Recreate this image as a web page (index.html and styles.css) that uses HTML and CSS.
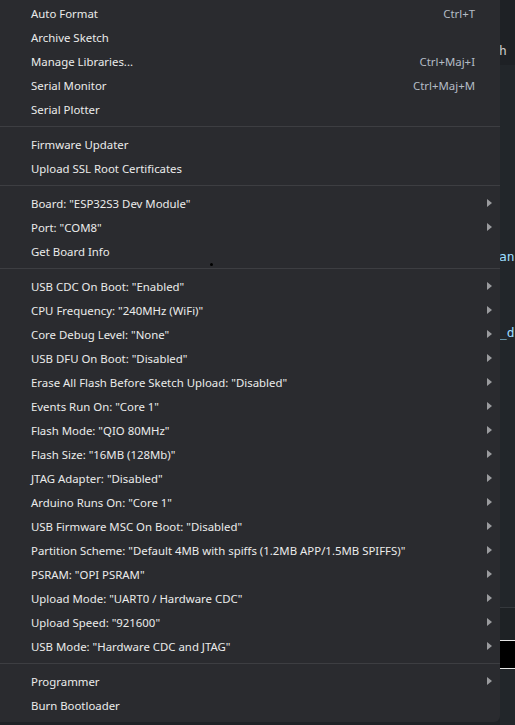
FILE: index.html
```html
<!DOCTYPE html>
<html>
<head>
<meta charset="utf-8">
<link rel="stylesheet" href="styles.css">
</head>
<body>
<div class="screen">
  <div class="menu">
    <div class="row"><span class="label">Auto Format</span><span class="key">Ctrl+T</span><span class="sub"></span></div>
    <div class="row"><span class="label">Archive Sketch</span><span class="sub"></span></div>
    <div class="row"><span class="label">Manage Libraries...</span><span class="key">Ctrl+Maj+I</span><span class="sub"></span></div>
    <div class="row"><span class="label">Serial Monitor</span><span class="key">Ctrl+Maj+M</span><span class="sub"></span></div>
    <div class="row"><span class="label">Serial Plotter</span><span class="sub"></span></div>
    <div class="sep"></div>
    <div class="row"><span class="label">Firmware Updater</span><span class="sub"></span></div>
    <div class="row"><span class="label">Upload SSL Root Certificates</span><span class="sub"></span></div>
    <div class="sep"></div>
    <div class="row"><span class="label">Board: "ESP32S3 Dev Module"</span><span class="sub"><i class="tri"></i></span></div>
    <div class="row"><span class="label">Port: "COM8"</span><span class="sub"><i class="tri"></i></span></div>
    <div class="row"><span class="label">Get Board Info</span><span class="sub"></span></div>
    <div class="sep"></div>
    <div class="row"><span class="label">USB CDC On Boot: "Enabled"</span><span class="sub"><i class="tri"></i></span></div>
    <div class="row"><span class="label">CPU Frequency: "240MHz (WiFi)"</span><span class="sub"><i class="tri"></i></span></div>
    <div class="row"><span class="label">Core Debug Level: "None"</span><span class="sub"><i class="tri"></i></span></div>
    <div class="row"><span class="label">USB DFU On Boot: "Disabled"</span><span class="sub"><i class="tri"></i></span></div>
    <div class="row"><span class="label">Erase All Flash Before Sketch Upload: "Disabled"</span><span class="sub"><i class="tri"></i></span></div>
    <div class="row"><span class="label">Events Run On: "Core 1"</span><span class="sub"><i class="tri"></i></span></div>
    <div class="row"><span class="label">Flash Mode: "QIO 80MHz"</span><span class="sub"><i class="tri"></i></span></div>
    <div class="row"><span class="label">Flash Size: "16MB (128Mb)"</span><span class="sub"><i class="tri"></i></span></div>
    <div class="row"><span class="label">JTAG Adapter: "Disabled"</span><span class="sub"><i class="tri"></i></span></div>
    <div class="row"><span class="label">Arduino Runs On: "Core 1"</span><span class="sub"><i class="tri"></i></span></div>
    <div class="row"><span class="label">USB Firmware MSC On Boot: "Disabled"</span><span class="sub"><i class="tri"></i></span></div>
    <div class="row"><span class="label">Partition Scheme: "Default 4MB with spiffs (1.2MB APP/1.5MB SPIFFS)"</span><span class="sub"><i class="tri"></i></span></div>
    <div class="row"><span class="label">PSRAM: "OPI PSRAM"</span><span class="sub"><i class="tri"></i></span></div>
    <div class="row"><span class="label">Upload Mode: "UART0 / Hardware CDC"</span><span class="sub"><i class="tri"></i></span></div>
    <div class="row"><span class="label">Upload Speed: "921600"</span><span class="sub"><i class="tri"></i></span></div>
    <div class="row"><span class="label">USB Mode: "Hardware CDC and JTAG"</span><span class="sub"><i class="tri"></i></span></div>
    <div class="sep"></div>
    <div class="row"><span class="label">Programmer</span><span class="sub"><i class="tri"></i></span></div>
    <div class="row"><span class="label">Burn Bootloader</span><span class="sub"></span></div>
    <i class="dot"></i>
  </div>
  <div class="editor">
    <div class="ed-top"><span class="frag grey">h</span></div>
    <div class="ed-main">
      <div class="gap g1"></div>
      <div class="frag blue">an</div>
      <div class="gap g2"></div>
      <div class="frag blue">_d</div>
    </div>
    <div class="ed-panel"></div>
    <div class="ed-black"></div>
    <div class="ed-bottom"></div>
  </div>
</div>
</body>
</html>
```
FILE: styles.css
```css
html, body {
  margin: 0;
  padding: 0;
  background: #1f2226;
}
.screen {
  display: flex;
  width: 515px;
  height: 725px;
  overflow: hidden;
  font-family: "Noto Sans", "Open Sans", sans-serif;
  font-size: 11.4px;
}
.menu {
  position: relative;
  width: 500px;
  flex: none;
  align-self: flex-start;
  background: #2a2b2f;
  padding: 1px 0 5px 0;
  border-bottom-right-radius: 6px;
}
.row {
  display: flex;
  align-items: center;
  height: 24px;
  padding: 0 8px 0 31px;
  color: #ebebeb;
  white-space: nowrap;
}
.label {
  flex: 1;
}
.key {
  color: #b4bcc6;
}
.sub {
  width: 17px;
  flex: none;
  display: flex;
  align-items: center;
}
.tri {
  display: block;
  margin-left: 12px;
  width: 0;
  height: 0;
  border-left: 5px solid #9a9b9e;
  border-top: 4px solid transparent;
  border-bottom: 4px solid transparent;
}
.sep {
  height: 1px;
  background: #3d3e42;
  margin: 5px 0 5px 0;
}
.dot {
  position: absolute;
  left: 210px;
  top: 263px;
  width: 3px;
  height: 3px;
  border-radius: 50%;
  background: #000;
}
.editor {
  flex: 1;
  display: flex;
  flex-direction: column;
  font-family: "DejaVu Sans Mono", monospace;
  font-size: 13px;
  line-height: 16px;
}
.ed-top {
  height: 65px;
  background: #1e2125;
  display: flex;
  align-items: flex-end;
  padding-bottom: 6px;
  box-sizing: border-box;
}
.ed-main {
  height: 542px;
  background: #22262a;
  border-bottom: 1px solid #34383c;
}
.g1 { height: 184px; }
.g2 { height: 60px; }
.frag {
  white-space: nowrap;
  margin-left: -1px;
}
.grey { color: #c9c9c9; }
.blue { color: #9cdcfe; }
.ed-panel {
  height: 32px;
  background: #1e2225;
  border-bottom: 1px solid #e6e6e6;
}
.ed-black {
  height: 27px;
  background: #000;
  border-bottom: 1px solid #e6e6e6;
}
.ed-bottom {
  flex: 1;
  background: #22262a;
}
```
